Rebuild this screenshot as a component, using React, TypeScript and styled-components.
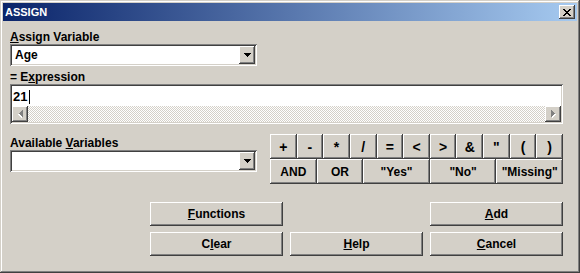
import styled, { createGlobalStyle, css } from "styled-components";

const GlobalStyle = createGlobalStyle`
  html, body {
    margin: 0;
    padding: 0;
    background: #d4d0c8;
  }
  * {
    box-sizing: border-box;
  }
`;

const raised = css`
  box-shadow: inset -1px -1px #404040, inset 1px 1px #ffffff,
    inset -2px -2px #808080, inset 2px 2px #d4d0c8;
`;

const sunken = css`
  box-shadow: inset 1px 1px #808080, inset -1px -1px #ffffff,
    inset 2px 2px #404040, inset -2px -2px #d4d0c8;
`;

const Window = styled.div`
  width: 580px;
  height: 273px;
  padding: 3px;
  background: #d4d0c8;
  font-family: "Liberation Sans", Arial, sans-serif;
  font-weight: bold;
  font-size: 12px;
  color: #000;
  box-shadow: inset -1px -1px #404040, inset 1px 1px #d4d0c8,
    inset -2px -2px #808080, inset 2px 2px #ffffff;
`;

const TitleBar = styled.div`
  height: 18px;
  display: flex;
  align-items: center;
  justify-content: space-between;
  padding: 0 2px 0 2px;
  background: linear-gradient(to right, #0a246a, #a6caf0);
`;

const TitleText = styled.span`
  color: #fff;
  font-size: 11px;
  line-height: 14px;
`;

const CloseButton = styled.div`
  width: 16px;
  height: 14px;
  display: flex;
  align-items: center;
  justify-content: center;
  background: #d4d0c8;
  ${raised}
`;

const Body = styled.div`
  padding: 9px 0 0 7px;
`;

const FieldLabel = styled.div<{ $gap?: number }>`
  height: 14px;
  line-height: 14px;
  margin-top: ${(p) => p.$gap ?? 0}px;
  white-space: nowrap;
`;

const ComboBox = styled.div`
  width: 247px;
  height: 22px;
  padding: 2px;
  display: flex;
  align-items: stretch;
  background: #fff;
  ${sunken}
`;

const ComboText = styled.div`
  flex: 1;
  padding-left: 3px;
  line-height: 18px;
`;

const DropButton = styled.div`
  width: 16px;
  height: 18px;
  display: flex;
  align-items: center;
  justify-content: center;
  background: #d4d0c8;
  ${raised}
`;

const ExpressionBox = styled.div`
  width: 553px;
  height: 40px;
  padding: 2px;
  display: flex;
  flex-direction: column;
  background: #fff;
  ${sunken}
`;

const ExpressionText = styled.div`
  height: 20px;
  padding: 1px 0 0 1px;
  display: flex;
  align-items: center;
  font-size: 13px;
`;

const Caret = styled.span`
  display: inline-block;
  width: 1px;
  height: 14px;
  margin-left: 2px;
  background: #000;
`;

const HScroll = styled.div`
  height: 16px;
  display: flex;
`;

const ScrollButton = styled.div`
  width: 16px;
  height: 16px;
  display: flex;
  align-items: center;
  justify-content: center;
  background: #d4d0c8;
  ${raised}
`;

const ScrollTrack = styled.div`
  flex: 1;
  background-image: repeating-conic-gradient(#ffffff 0% 25%, #d4d0c8 0% 50%);
  background-size: 2px 2px;
`;

const MiddleRow = styled.div`
  display: flex;
  align-items: flex-start;
  gap: 13px;
  margin-top: 10px;
`;

const LeftCol = styled.div`
  padding-top: 2px;
`;

const OperatorPanel = styled.div`
  width: 293px;
  display: flex;
  flex-direction: column;
`;

const OperatorRow = styled.div<{ $cols: string; $size?: number }>`
  display: grid;
  grid-template-columns: ${(p) => p.$cols};
  height: 25px;
  font-size: ${(p) => p.$size ?? 12}px;
`;

const OpButton = styled.div`
  display: flex;
  align-items: center;
  justify-content: center;
  background: #d4d0c8;
  white-space: nowrap;
  ${raised}
`;

const ActionGrid = styled.div`
  display: grid;
  grid-template-columns: repeat(3, 133px);
  grid-auto-rows: 24px;
  column-gap: 7px;
  row-gap: 6px;
  margin: 18px 0 0 140px;
`;

const ActionButton = styled.div<{ $col?: number }>`
  grid-column: ${(p) => p.$col ?? "auto"};
  display: flex;
  align-items: center;
  justify-content: center;
  background: #d4d0c8;
  ${raised}
`;

const CloseIcon = () => (
  <svg width="8" height="7" viewBox="0 0 8 7" shapeRendering="crispEdges">
    <path
      fill="#000"
      d="M0 0h2v1H0zM6 0h2v1H6zM1 1h2v1H1zM5 1h2v1H5zM2 2h4v1H2zM3 3h2v1H3zM2 4h4v1H2zM1 5h2v1H1zM5 5h2v1H5zM0 6h2v1H0zM6 6h2v1H6z"
    />
  </svg>
);

const DownArrow = () => (
  <svg width="7" height="4" viewBox="0 0 7 4" shapeRendering="crispEdges">
    <path fill="#000" d="M0 0h7v1H0zM1 1h5v1H1zM2 2h3v1H2zM3 3h1v1H3z" />
  </svg>
);

const SideArrow = ({ dir }: { dir: "left" | "right" }) => (
  <svg
    width="5"
    height="8"
    viewBox="0 0 5 8"
    shapeRendering="crispEdges"
    style={{ transform: dir === "left" ? "scaleX(-1)" : undefined }}
  >
    <path fill="#ffffff" d="M1 1h1v7H1zM2 2h1v5H2zM3 3h1v3H3zM4 4h1v1H4z" />
    <path fill="#808080" d="M0 0h1v7H0zM1 1h1v5H1zM2 2h1v3H2zM3 3h1v1H3z" />
  </svg>
);

const operators = ["+", "-", "*", "/", "=", "<", ">", "&", '"', "(", ")"];
const keywords = ["AND", "OR", '"Yes"', '"No"', '"Missing"'];

export default function App() {
  return (
    <>
      <GlobalStyle />
      <Window>
        <TitleBar>
          <TitleText>ASSIGN</TitleText>
          <CloseButton>
            <CloseIcon />
          </CloseButton>
        </TitleBar>
        <Body>
          <FieldLabel>
            <u>A</u>ssign Variable
          </FieldLabel>
          <ComboBox>
            <ComboText>Age</ComboText>
            <DropButton>
              <DownArrow />
            </DropButton>
          </ComboBox>

          <FieldLabel $gap={4}>
            = E<u>x</u>pression
          </FieldLabel>
          <ExpressionBox>
            <ExpressionText>
              21
              <Caret />
            </ExpressionText>
            <HScroll>
              <ScrollButton>
                <SideArrow dir="left" />
              </ScrollButton>
              <ScrollTrack />
              <ScrollButton>
                <SideArrow dir="right" />
              </ScrollButton>
            </HScroll>
          </ExpressionBox>

          <MiddleRow>
            <LeftCol>
              <FieldLabel>
                Available <u>V</u>ariables
              </FieldLabel>
              <ComboBox>
                <ComboText />
                <DropButton>
                  <DownArrow />
                </DropButton>
              </ComboBox>
            </LeftCol>
            <OperatorPanel>
              <OperatorRow $cols="repeat(11, 1fr)" $size={14}>
                {operators.map((op) => (
                  <OpButton key={op}>{op}</OpButton>
                ))}
              </OperatorRow>
              <OperatorRow $cols="7fr 7fr 10fr 10fr 10fr">
                {keywords.map((k) => (
                  <OpButton key={k}>{k}</OpButton>
                ))}
              </OperatorRow>
            </OperatorPanel>
          </MiddleRow>

          <ActionGrid>
            <ActionButton>
              <u>F</u>unctions
            </ActionButton>
            <ActionButton $col={3}>
              <u>A</u>dd
            </ActionButton>
            <ActionButton>
              C<u>l</u>ear
            </ActionButton>
            <ActionButton>
              <u>H</u>elp
            </ActionButton>
            <ActionButton>
              <u>C</u>ancel
            </ActionButton>
          </ActionGrid>
        </Body>
      </Window>
    </>
  );
}
